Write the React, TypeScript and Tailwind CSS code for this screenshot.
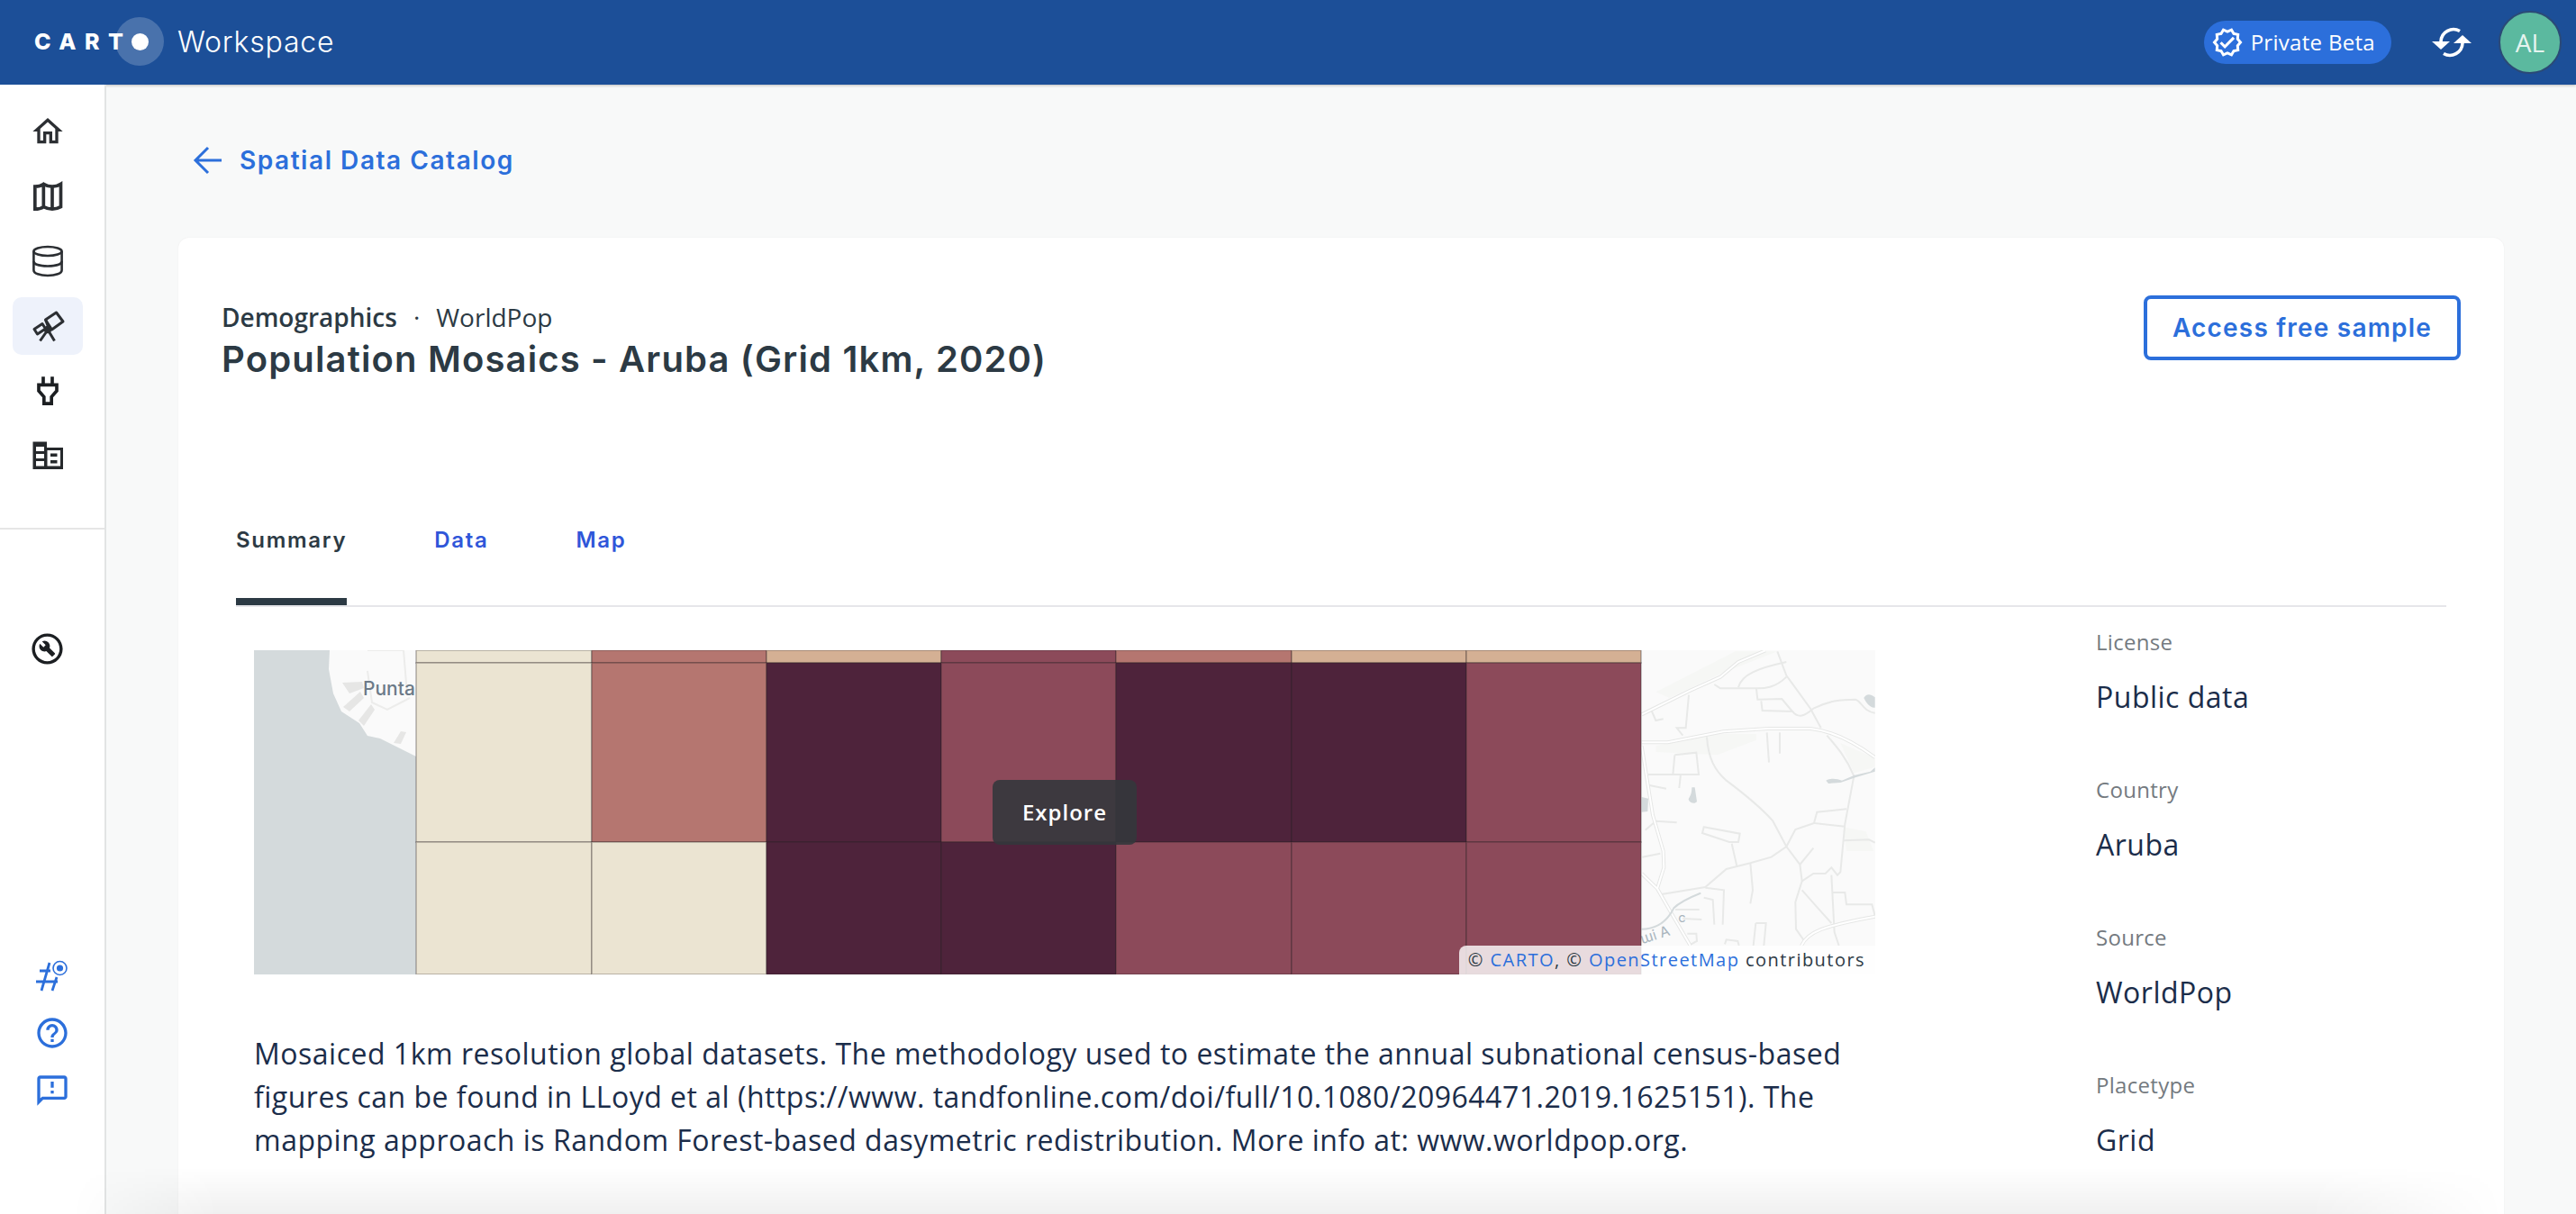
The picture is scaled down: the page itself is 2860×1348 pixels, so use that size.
import React from "react";
import {
  MdOutlineHome,
  MdOutlineBuildCircle,
  MdHelpOutline,
  MdOutlineFeedback,
  MdOutlineVerified,
} from "react-icons/md";

const BEIGE = "#ebe4d2";
const ROSE = "#b57670";
const TAN = "#d4b094";
const WINE = "#8c4a5a";
const DARK = "#4e233b";

const COLS = [462, 657, 851, 1045, 1239, 1434, 1628, 1822];
const ROWS = [722, 736, 935, 1082];
const CELLS = [
  [BEIGE, ROSE, TAN, WINE, ROSE, TAN, TAN],
  [BEIGE, ROSE, DARK, WINE, DARK, DARK, WINE],
  [BEIGE, BEIGE, DARK, DARK, WINE, WINE, WINE],
];

const MINOR_ROADS = [
  "M490 25 L520 105 L600 215 L635 280",
  "M520 110 C480 150 440 148 420 148 L300 148 L280 135",
  "M520 60 C430 80 370 100 360 145",
  "M420 150 L424 185 L505 183 L540 225 L440 222 L436 190",
  "M540 225 C560 250 580 240 610 215 C660 190 700 185 750 185 C770 190 775 225 815 230",
  "M195 170 L185 280 L155 280 L175 305",
  "M70 220 L85 255 L110 250",
  "M255 310 C260 380 280 420 320 455 C380 500 440 550 475 590 L520 675 L565 735 L572 790 L550 860 L552 950 L580 990",
  "M655 305 C690 345 720 380 745 440 L715 600 L700 760 L690 770 L670 745 L650 765 L610 765 L572 790",
  "M720 550 L622 560 L612 597 L715 608",
  "M612 597 L550 618 L520 675 L470 710 L400 730 L320 750 L250 810 L100 835",
  "M610 680 L565 735",
  "M400 730 L408 820 L400 865",
  "M338 665 L355 740",
  "M245 610 L365 632 L360 660 L330 660 L240 630 Z",
  "M250 812 L312 820 L308 935",
  "M245 845 L275 852 L280 935",
  "M148 370 L220 362 L228 435 L60 435",
  "M148 370 L142 435",
  "M168 435 L163 480",
  "M60 470 L120 482",
  "M50 620 L85 590 L155 595",
  "M40 710 L100 698",
  "M572 820 L625 880 L670 930",
  "M670 770 L680 960 L695 1005",
  "M675 828 L715 828 L720 868 L805 868 L815 905",
  "M710 655 L795 652 L815 662",
  "M418 930 L452 930 L445 1005",
  "M418 930 L410 1005",
  "M315 1000 L320 985 L358 990 L362 1005",
  "M150 885 L230 885",
  "M175 915 L238 918",
  "M190 965 L220 965 L222 990 L195 1005",
  "M455 295 L462 395",
  "M498 295 L498 365",
];

const MAJOR_ROADS = [
  "M38 235 L200 155 L300 110 L360 60 L450 22",
  "M38 328 L125 328 L310 292 L460 282 L600 282 C680 290 750 330 815 378",
  "M38 340 L75 570 L110 690 L112 745 L90 815",
  "M38 765 L90 815 L130 885 L200 1005",
  "M570 1005 C590 960 640 940 815 908",
];

function MapArt() {
  return (
    <svg
      viewBox="282 722 1800 360"
      width={1800}
      height={360}
      className="block"
    >
      <rect x={282} y={722} width={1800} height={360} fill="#fafafa" />
      <polygon
        points="282,722 366,722 365,743 370,770 379,790 399,803 408,817 422,820 462,840 462,1082 282,1082"
        fill="#d4dadc"
      />
      <g fill="#e6e6e5">
        <polygon points="380,758 402,757 404,764 388,770" />
        <polygon points="381,785 400,768 404,775 388,790" />
        <polygon points="398,800 412,782 416,788 404,806" />
        <polygon points="437,825 445,812 451,813 445,826" />
      </g>
      <g fill="none" stroke="#ececeb" strokeWidth={2}>
        <path d="M408 722 L448 722 M408 745 L413 780 L430 788 L455 775" />
        <path d="M448 722 L452 770" />
      </g>
      <text
        x={403}
        y={772}
        fontFamily="Inter, sans-serif"
        fontWeight={500}
        fontSize={21}
        fill="#6c7a88"
      >
        Punta
      </text>

      <g transform="translate(1810 715) scale(0.33333)">
        <g fill="#f6f7f5">
          <polygon points="85,160 350,25 490,25 300,100 130,180" />
          <polygon points="85,340 255,300 420,300 420,320 290,370 85,360" />
          <polygon points="700,330 815,380 815,410 745,430" />
          <polygon points="710,610 785,625 810,690 720,690" />
        </g>
        <g fill="none" stroke="#e8e9e8" strokeWidth={2}>
          {MINOR_ROADS.map((d) => (
            <path key={d} d={d} vectorEffect="non-scaling-stroke" />
          ))}
        </g>
        <g fill="none" stroke="#e6e7e6" strokeWidth={4}>
          {MAJOR_ROADS.map((d) => (
            <path key={d} d={d} vectorEffect="non-scaling-stroke" />
          ))}
        </g>
        <g fill="none" stroke="#ffffff" strokeWidth={2}>
          {MAJOR_ROADS.map((d) => (
            <path key={d} d={d} vectorEffect="non-scaling-stroke" />
          ))}
        </g>
        <g fill="#d4dadc">
          <path d="M778 180 C785 165 800 165 815 178 L815 212 C800 215 785 195 778 180 Z" />
          <path d="M205 478 L215 478 L222 525 C215 535 198 530 194 518 C196 510 205 505 205 478 Z" />
          <path d="M38 510 L60 515 L58 558 L38 560 Z" />
          <path d="M652 455 C670 445 690 450 705 455 L745 438 L800 425 L815 412 L815 425 L750 445 L700 462 L660 465 Z" />
        </g>
        <path
          d="M38 950 C80 950 120 930 145 880 C170 855 210 840 235 830"
          fill="none"
          stroke="#d4dadc"
          strokeWidth={2}
          vectorEffect="non-scaling-stroke"
        />
        <text
          x={40}
          y={1000}
          fontFamily="Inter, sans-serif"
          fontSize={48}
          fill="#a9b5bd"
          transform="rotate(-18 40 1000)"
        >
          ɯi A
        </text>
        <text x={160} y={928} fontFamily="Inter, sans-serif" fontSize={44} fill="#a9b5bd">
          c
        </text>
      </g>

      {CELLS.map((row, r) =>
        row.map((fill, c) => (
          <rect
            key={`${r}-${c}`}
            x={COLS[c]}
            y={ROWS[r]}
            width={COLS[c + 1] - COLS[c]}
            height={ROWS[r + 1] - ROWS[r]}
            fill={fill}
            stroke="#2a1f22"
            strokeOpacity={0.34}
            strokeWidth={1.5}
          />
        ))
      )}
    </svg>
  );
}

function MapIcon() {
  return (
    <svg viewBox="0 0 24 24" width={40} height={40} fill="none" stroke="#2c2f33" strokeWidth={2.2}>
      <path d="M3.5 5.5 Q7 5.5 9.2 3.8 Q12 5.5 15 5.5 Q18 5.5 20.7 3.8 V19 Q18 20.5 15 20.5 Q12 20.5 9.2 19 Q7 20.5 3.5 20.5 Z M9.2 3.8 V19 M15 5.5 V20.5" />
    </svg>
  );
}

function DatabaseIcon() {
  return (
    <svg viewBox="32 30 40 40" width={40} height={40} fill="none" stroke="#2c2f33" strokeWidth={2.6}>
      <ellipse cx={52} cy={39} rx={15.6} ry={5} />
      <path d="M36.4 39 V60 C36.4 63.5 43 66 52 66 C61 66 67.6 63.5 67.6 60 V39" />
      <path d="M36.4 50 C36.4 53.5 43 55.5 52 55.5 C61 55.5 67.6 53.5 67.6 50" />
    </svg>
  );
}

function TelescopeIcon() {
  return (
    <svg viewBox="32 102 40 40" width={40} height={40} fill="none" stroke="#2c2f33" strokeWidth={3} strokeLinejoin="round">
      <path d="M49.5 115 L61.5 107 L69 117 L56.5 126 Z" />
      <path d="M49.5 115 L54 126.5" />
      <path d="M37 125.5 L46 119.5 L49.5 125 L40.5 131 Z" />
      <circle cx={52} cy={126} r={2.8} fill="#2c2f33" />
      <path d="M50.5 128.5 L43.5 138.5 M53.5 128.5 L59.5 138.5" />
    </svg>
  );
}

function PlugIcon() {
  return (
    <svg viewBox="0 0 24 24" width={40} height={40} fill="none" stroke="#1c1f22" strokeWidth={2.2}>
      <path d="M9 2.5 V8 M15 2.5 V8 M6 8 H18 V12 L14.5 16 V20.5 H9.5 V16 L6 12 Z" />
    </svg>
  );
}

function BuildingIcon() {
  return (
    <svg viewBox="32 246 40 40" width={40} height={40}>
      <path
        fillRule="evenodd"
        fill="#26292c"
        d="M35.5 250.5 H51 V257 H69 V281 H35.5 Z M39 256 V261 H48 V256 Z M39 264 V269 H48 V264 Z M39 272 V277.5 H48 V272 Z M51.5 260 V277.5 H66 V260 Z"
      />
      <path fill="#26292c" d="M55 263.5 H62.5 V267 H55 Z M55 271 H62.5 V274.5 H55 Z" />
    </svg>
  );
}

function SyncIcon() {
  return (
    <svg viewBox="0 0 44 34" width={44} height={34} fill="none" className="shrink-0">
      <path d="M31 4.5 A14 14 0 0 0 10 16" stroke="#fff" strokeWidth={3.6} />
      <path d="M13 29.5 A14 14 0 0 0 34 18" stroke="#fff" strokeWidth={3.6} />
      <polygon points="0,16 20,16 10,25" fill="#fff" />
      <polygon points="24,18 44,18 34,9" fill="#fff" />
    </svg>
  );
}

function HashIcon() {
  return (
    <svg viewBox="0 0 36 36" width={36} height={36} fill="none" stroke="#2c6fdb">
      <g strokeWidth={2.8}>
        <path d="M15 3 L6 34 M23 19 L18 34 M4 12 H16 M0 24 H24" />
      </g>
      <circle cx={26.5} cy={9} r={7.5} strokeWidth={1.6} />
      <circle cx={26.5} cy={9} r={3.6} fill="#2c6fdb" stroke="none" />
    </svg>
  );
}

function NavItem({ active, children }: { active?: boolean; children: React.ReactNode }) {
  return (
    <div
      className={`flex h-[64px] w-[78px] items-center justify-center rounded-[10px] text-[#2c2f33] ${
        active ? "bg-[#eef2fb]" : ""
      }`}
    >
      {children}
    </div>
  );
}

function Sidebar() {
  return (
    <aside className="flex h-full w-[118px] shrink-0 flex-col border-r-2 border-[#e2e4e4] bg-white">
      <div className="flex flex-col gap-[8px] pl-[14px] pt-[20px]">
        <NavItem>
          <MdOutlineHome size={40} />
        </NavItem>
        <NavItem>
          <MapIcon />
        </NavItem>
        <NavItem>
          <DatabaseIcon />
        </NavItem>
        <NavItem active>
          <TelescopeIcon />
        </NavItem>
        <NavItem>
          <PlugIcon />
        </NavItem>
        <NavItem>
          <BuildingIcon />
        </NavItem>
      </div>
      <div className="mt-[48px] h-[2px] w-full bg-[#e6e6e6]" />
      <div className="mt-[112px] flex justify-start pl-[32px] text-[#1c1f22]">
        <MdOutlineBuildCircle size={41} />
      </div>
      <div className="mt-auto flex flex-col gap-[24px] pb-[117px] pl-[38px] text-[#2c6fdb]">
        <div className="mb-[-1px] mt-[1px] flex h-[40px] w-[40px] items-center justify-center">
          <HashIcon />
        </div>
        <MdHelpOutline size={40} />
        <MdOutlineFeedback size={40} />
      </div>
    </aside>
  );
}

function Header() {
  return (
    <header className="flex h-[94px] shrink-0 items-center bg-[#1c4f98] pr-[16px] shadow-[0_1px_3px_rgba(0,0,0,0.25)]">
      <div className="relative h-full w-[197px] shrink-0">
        <span className="absolute left-[38px] top-[28px] font-['Inter',sans-serif] text-[25px] font-extrabold leading-[36px] tracking-[9.5px] text-white">
          CART
        </span>
        <span className="absolute left-[128px] top-[19px] flex h-[54px] w-[54px] items-center justify-center rounded-full bg-white/20">
          <span className="h-[19px] w-[19px] rounded-full bg-white" />
        </span>
      </div>
      <span className="font-['Inter',sans-serif] text-[32px] font-light leading-[40px] tracking-[0.8px] text-white">
        Workspace
      </span>
      <div className="ml-auto flex items-center">
        <div className="flex h-[48px] items-center gap-[8px] rounded-full bg-[#2c6fdb] pl-[8px] pr-[18px] text-white">
          <MdOutlineVerified size={36} />
          <span className="font-['Open_Sans',sans-serif] text-[24px] leading-[32px] tracking-[0.3px]">
            Private Beta
          </span>
        </div>
        <div className="ml-[45px] mr-[30px]">
          <SyncIcon />
        </div>
        <div className="flex h-[70px] w-[70px] items-center justify-center rounded-full border-2 border-[#2b4a76] bg-[#5bb99f] font-['Open_Sans',sans-serif] text-[28px] text-[#e6f4ef]">
          AL
        </div>
      </div>
    </header>
  );
}

function Meta({ label, value }: { label: string; value: string }) {
  return (
    <div className="flex flex-col gap-[16px]">
      <div className="h-[40px] text-[24px] leading-[40px] tracking-[0.3px] text-[#747a80]">{label}</div>
      <div className="h-[48px] pt-[1px] text-[32px] leading-[48px] tracking-[0.5px] text-[#1b2d4a]">{value}</div>
    </div>
  );
}

export default function App() {
  return (
    <div className="flex h-screen w-full flex-col overflow-hidden bg-[#f8f9f9] font-['Open_Sans',sans-serif]">
      <Header />
      <div className="flex min-h-0 flex-1">
        <Sidebar />
        <main className="min-w-0 flex-1 px-[80px]">
          <a className="mt-[56px] flex h-[56px] items-center gap-[20px] pl-[16px] text-[#2c6fdb]">
            <svg viewBox="0 0 32 32" width={32} height={32} fill="none" stroke="#2c6fdb" strokeWidth={3}>
              <path d="M32 16 H3 M17 2 L3 16 L17 30" />
            </svg>
            <span className="font-['Inter',sans-serif] text-[28px] font-semibold leading-[40px] tracking-[1.55px]">
              Spatial Data Catalog
            </span>
          </a>
          <section className="relative mt-[58px] h-[1100px] rounded-t-[12px] bg-white px-[48px] shadow-[0_0_2px_rgba(0,0,0,0.06)]">
            <div className="flex items-start justify-between pt-[64px]">
              <div>
                <div className="flex h-[48px] items-center text-[28px] leading-[48px] text-[#2c3a44]">
                  <span className="font-semibold">Demographics</span>
                  <span className="mx-[18px]">·</span>
                  <span>WorldPop</span>
                </div>
                <h1 className="mt-[-5px] font-['Inter',sans-serif] text-[40px] font-semibold leading-[56px] tracking-[1.15px] text-[#2c3a44]">
                  Population Mosaics - Aruba (Grid 1km, 2020)
                </h1>
              </div>
              <button className="flex h-[72px] w-[352px] items-center justify-center rounded-[8px] border-4 border-[#2c6fdb] font-['Inter',sans-serif] text-[28px] font-semibold tracking-[1.2px] text-[#2c6fdb]">
                Access free sample
              </button>
            </div>

            <nav className="mx-[16px] mt-[101px] flex h-[146px] gap-[97px] border-b-2 border-[#e6e6ea] font-['Inter',sans-serif] text-[24px] font-semibold tracking-[1.7px]">
              <div className="flex h-[144px] items-center border-b-8 border-[#2c3a44] pt-[8px] text-[#2c3a44]">
                Summary
              </div>
              <div className="flex h-[144px] items-center text-[#2f56d9]">Data</div>
              <div className="flex h-[144px] items-center text-[#2f56d9]">Map</div>
            </nav>

            <div className="flex">
              <div className="ml-[36px] w-[1800px] shrink-0 pt-[48px]">
                <div className="relative h-[360px] w-[1800px] overflow-hidden">
                  <MapArt />
                  <div className="absolute left-[820px] top-[144px] flex h-[72px] w-[160px] items-center justify-center rounded-[8px] bg-[#34373c]/90 text-[24px] font-semibold tracking-[1px] text-white">
                    Explore
                  </div>
                  <div className="absolute bottom-0 right-0 flex h-[32px] items-center rounded-tl-[8px] bg-white/80 pl-[10px] pr-[11px] text-[20px] leading-[32px] tracking-[1.45px] text-[#2c3a44]">
                    <span>©&nbsp;</span>
                    <span className="text-[#2c6fdb]">CARTO</span>
                    <span>,&nbsp;©&nbsp;</span>
                    <span className="text-[#2c6fdb]">OpenStreetMap</span>
                    <span>&nbsp;contributors</span>
                  </div>
                </div>
                <p className="mt-[64px] text-[32px] leading-[48px] tracking-[0.5px] text-[#1b2d4a]">
                  Mosaiced 1km resolution global datasets. The methodology used to estimate the annual subnational census-based figures can be found in LLoyd et al (https://www. tandfonline.com/doi/full/10.1080/20964471.2019.1625151). The mapping approach is Random Forest-based dasymetric redistribution. More info at: www.worldpop.org.
                </p>
              </div>
              <div className="ml-[245px] flex flex-col gap-[60px] pt-[19px]">
                <Meta label="License" value="Public data" />
                <Meta label="Country" value="Aruba" />
                <Meta label="Source" value="WorldPop" />
                <Meta label="Placetype" value="Grid" />
              </div>
            </div>
          </section>
        </main>
      </div>
      <div className="pointer-events-none absolute bottom-0 left-[80px] h-[52px] w-[2700px] bg-gradient-to-t from-[#0000000f] to-transparent [mask-image:linear-gradient(to_right,transparent,black_6%,black_92%,transparent)]" />
    </div>
  );
}
